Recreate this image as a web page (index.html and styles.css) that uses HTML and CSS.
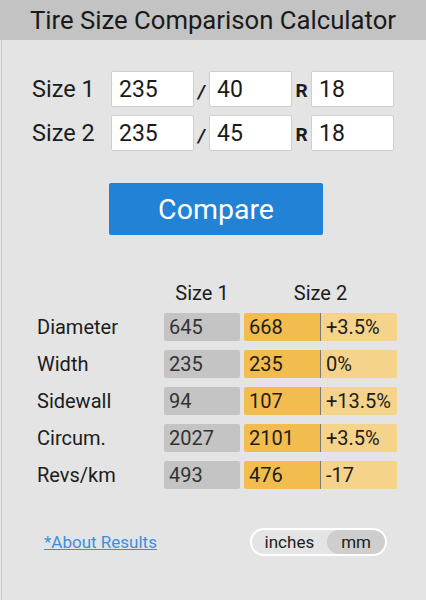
FILE: index.html
```html
<!DOCTYPE html>
<html lang="en">
<head>
  <meta charset="UTF-8">
  <meta name="viewport" content="width=device-width, initial-scale=1.0">
  <title>Tire Size Comparison Calculator</title>
  <link rel="stylesheet" href="styles.css">
</head>
<body>
  <h1 class="title">Tire Size Comparison Calculator</h1>
  <main class="page">
    <!-- Tire sizes -->
    <div class="sizes">
      <div class="size-row">
        <label class="size-label" for="w1">Size 1</label>
        <input class="size-input" id="w1" type="text" value="235">
        <span class="sep">/</span>
        <input class="size-input" type="text" value="40">
        <span class="sep sep-r">R</span>
        <input class="size-input" type="text" value="18">
      </div>
      <div class="size-row">
        <label class="size-label" for="w2">Size 2</label>
        <input class="size-input" id="w2" type="text" value="235">
        <span class="sep">/</span>
        <input class="size-input" type="text" value="45">
        <span class="sep sep-r">R</span>
        <input class="size-input" type="text" value="18">
      </div>
    </div>

    <!-- Compare button -->
    <button class="compare" type="button">Compare</button>

    <!-- Results -->
    <div class="results">
      <div class="res-row res-head">
        <span></span>
        <span class="head-cell">Size 1</span>
        <span class="head-cell">Size 2</span>
      </div>
      <div class="res-row">
        <span class="res-label">Diameter</span>
        <span class="cell cell-1">645</span>
        <span class="cell cell-2">668</span>
        <span class="cell cell-diff">+3.5%</span>
      </div>
      <div class="res-row">
        <span class="res-label">Width</span>
        <span class="cell cell-1">235</span>
        <span class="cell cell-2">235</span>
        <span class="cell cell-diff">0%</span>
      </div>
      <div class="res-row">
        <span class="res-label">Sidewall</span>
        <span class="cell cell-1">94</span>
        <span class="cell cell-2">107</span>
        <span class="cell cell-diff">+13.5%</span>
      </div>
      <div class="res-row">
        <span class="res-label">Circum.</span>
        <span class="cell cell-1">2027</span>
        <span class="cell cell-2">2101</span>
        <span class="cell cell-diff">+3.5%</span>
      </div>
      <div class="res-row">
        <span class="res-label">Revs/km</span>
        <span class="cell cell-1">493</span>
        <span class="cell cell-2">476</span>
        <span class="cell cell-diff">-17</span>
      </div>
    </div>

    <!-- Footer -->
    <div class="footer">
      <a class="about" href="#">*About Results</a>
      <div class="units">
        <span class="unit">inches</span>
        <span class="unit unit-on">mm</span>
      </div>
    </div>
  </main>
</body>
</html>
```

FILE: styles.css
```css
body {
  margin: 0;
  font-family: Roboto, "Noto Sans", sans-serif;
  background-color: #e4e4e4;
  color: #1c1c1c;
}
.title {
  margin: 0;
  height: 40px;
  line-height: 40px;
  background-color: #c3c3c3;
  font-size: 25.7px;
  font-weight: normal;
  text-align: center;
  color: #1a1a1a;
}
.page {
  margin-left: 1px;
  border-left: 1px solid #cfcfcf;
  min-height: 560px;
  padding-top: 31px;
  box-sizing: border-box;
}
.sizes {
  display: flex;
  flex-direction: column;
  gap: 8px;
  padding-left: 30px;
}
.size-row {
  display: flex;
  align-items: center;
  height: 36px;
}
.size-label {
  width: 79px;
  font-size: 23.5px;
}
.size-input {
  width: 83px;
  height: 36px;
  box-sizing: border-box;
  border: 1px solid #cfcfcf;
  border-radius: 2px;
  padding: 0 7px;
  font-family: inherit;
  font-size: 23px;
  color: #1a1a1a;
  background: #fff;
}
.sep {
  width: 15px;
  text-align: center;
  font-size: 19px;
  font-weight: bold;
  font-style: italic;
  padding-top: 5px;
}
.sep-r {
  width: 19px;
  font-style: normal;
  font-size: 19px;
  padding-top: 2px;
}
.compare {
  display: block;
  margin: 32px 0 0 107px;
  width: 214px;
  height: 52px;
  border: none;
  border-radius: 2px;
  background-color: #2182d6;
  color: #fff;
  font-family: inherit;
  font-size: 28.5px;
}
.results {
  margin-top: 48px;
  display: flex;
  flex-direction: column;
  gap: 9px;
  padding-left: 35px;
}
.res-row {
  display: flex;
  align-items: center;
  height: 28px;
  font-size: 20px;
}
.res-head {
  height: 20px;
  margin-bottom: 1px;
}
.res-head span:first-child {
  width: 127px;
}
.head-cell {
  width: 76px;
  text-align: center;
}
.head-cell + .head-cell {
  width: 153px;
  margin-left: 4px;
}
.res-label {
  width: 127px;
}
.cell {
  height: 28px;
  line-height: 28px;
  box-sizing: border-box;
  padding-left: 5px;
  border-radius: 2px;
}
.cell-1 {
  width: 76px;
  background-color: #c4c4c4;
  color: #333;
}
.cell-2 {
  width: 77px;
  margin-left: 4px;
  background-color: #f2bd4e;
  border-right: 1px solid #7a7a7a;
  border-radius: 2px 0 0 2px;
}
.cell-diff {
  width: 76px;
  background-color: #f5d38b;
  border-radius: 0 2px 2px 0;
}
.footer {
  display: flex;
  align-items: center;
  justify-content: space-between;
  margin-top: 39px;
  padding: 0 39px 0 42px;
}
.about {
  color: #3a8fe0;
  font-size: 17px;
}
.units {
  display: flex;
  border: 2px solid #fff;
  border-radius: 14px;
  height: 28px;
  box-sizing: border-box;
  font-size: 17px;
  overflow: hidden;
}
.unit {
  padding: 0 13px 0 13px;
  line-height: 24px;
}
.unit-on {
  background-color: #cecece;
  border-radius: 12px;
  padding: 0 14px;
}
```
